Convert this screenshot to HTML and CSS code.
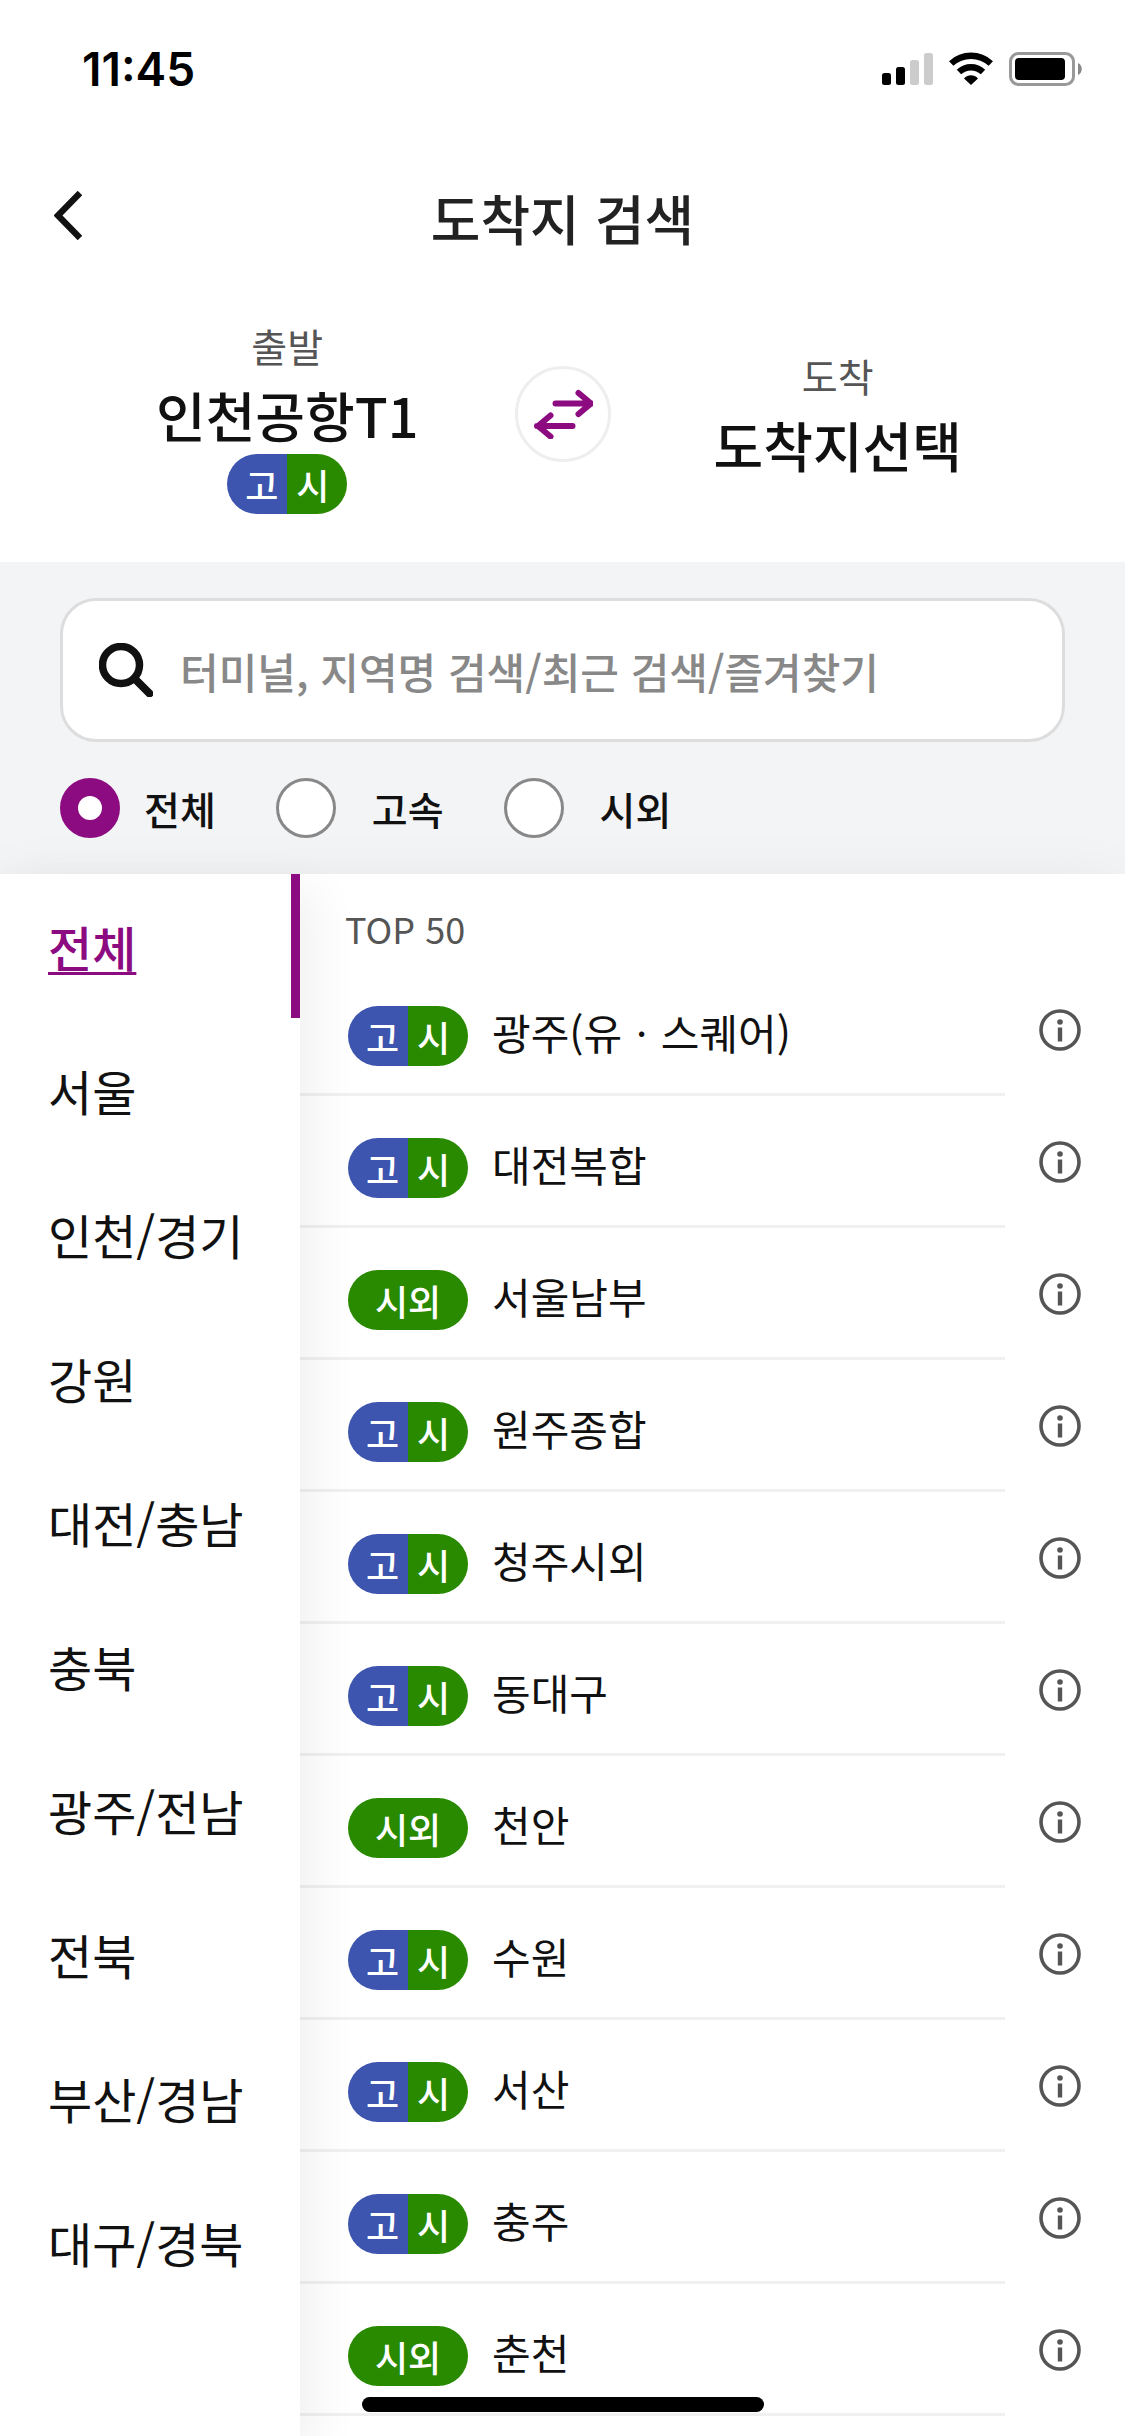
FILE: index.html
```html
<!DOCTYPE html>
<html lang="ko">
<head>
<meta charset="utf-8">
<meta name="viewport" content="width=device-width, initial-scale=1">
<title>도착지 검색</title>
<link rel="stylesheet" href="styles.css">
</head>
<body>
<svg class="sprite" aria-hidden="true">
  <symbol id="info" viewBox="0 0 42 42">
    <circle cx="21" cy="21" r="19" fill="none" stroke="currentColor" stroke-width="3.6"/>
    <circle cx="21" cy="13" r="2.8" fill="currentColor"/>
    <path d="M21 18.500v14" stroke="currentColor" stroke-width="4.400"/>
  </symbol>
</svg>

<div class="status-bar">
  <span class="status-time">11:45</span>
  <div class="status-icons">
    <svg width="51" height="34" viewBox="0 0 51 34" aria-hidden="true">
      <rect x="0" y="21" width="9" height="12" rx="2.500"/>
      <rect x="14" y="15" width="9" height="18" rx="2.500"/>
      <rect x="28" y="8" width="9" height="25" rx="2.500" fill="#ccc"/>
      <rect x="42" y="1" width="9" height="32" rx="2.500" fill="#ccc"/>
    </svg>
    <svg width="46" height="34" viewBox="0 0 46 34" aria-hidden="true">
      <path d="M3.200 11.500C14.500 1.200 31.500 1.200 42.800 11.500" fill="none" stroke="#000" stroke-width="6.400"/>
      <path d="M11 20C17.800 13.600 28.200 13.600 35 20" fill="none" stroke="#000" stroke-width="6.400"/>
      <path d="M16 26.500c4-4.300 10-4.300 14 0L23 33z"/>
    </svg>
    <svg width="74" height="34" viewBox="0 0 74 34" aria-hidden="true">
      <rect x="1.500" y="1.500" width="63" height="31" rx="8" fill="none" stroke="#999" stroke-width="3"/>
      <rect x="6" y="6" width="50" height="22" rx="4"/>
      <path d="M69 11c5 2 5 10 0 12z" fill="#888"/>
    </svg>
  </div>
</div>

<header class="header">
  <button class="back" type="button" aria-label="뒤로">
    <svg width="28" height="50" viewBox="0 0 28 50" aria-hidden="true"><path d="M26 2L4 24.500l22 22.500" fill="none" stroke="#111" stroke-width="6.400"/></svg>
  </button>
  <h1 class="title">도착지 검색</h1>
</header>

<section class="route">
  <div class="stop">
    <span class="stop-label">출발</span>
    <strong class="stop-name">인천공항T1</strong>
    <span class="badge"><span class="express">고</span><span class="intercity">시</span></span>
  </div>
  <button class="swap" type="button" aria-label="출발지와 도착지 바꾸기">
    <svg width="60" height="50" viewBox="0 0 60 50" aria-hidden="true"><path d="M22.500 14.500h36M45.500 4l12.500 10.500-12.500 10.500M39.500 37H4M17.500 26.500L5 37 17.500 47.500" fill="none" stroke="#8c0b80" stroke-width="6" stroke-linecap="round" stroke-linejoin="round"/></svg>
  </button>
  <div class="stop">
    <span class="stop-label">도착</span>
    <strong class="stop-name">도착지선택</strong>
  </div>
</section>

<form class="search">
  <label class="search-box">
    <svg width="54" height="54" viewBox="0 0 54 54" aria-hidden="true"><circle cx="22" cy="22" r="18.500" fill="none" stroke="#111" stroke-width="7.500"/><path d="M36 36l14.500 14.500" stroke="#111" stroke-width="8" stroke-linecap="round"/></svg>
    <input class="search-input" type="text" aria-label="터미널 검색" placeholder="터미널, 지역명 검색/최근 검색/즐겨찾기">
  </label>
  <div class="filters">
    <label class="filter"><input class="radio" type="radio" name="type" checked><span>전체</span></label>
    <label class="filter"><input class="radio" type="radio" name="type"><span>고속</span></label>
    <label class="filter"><input class="radio" type="radio" name="type"><span>시외</span></label>
  </div>
</form>

<main class="panel">
  <nav class="regions">
    <a class="region active" href="#all"><span>전체</span></a>
    <a class="region" href="#seoul">서울</a>
    <a class="region" href="#incheon">인천/경기</a>
    <a class="region" href="#gangwon">강원</a>
    <a class="region" href="#daejeon">대전/충남</a>
    <a class="region" href="#chungbuk">충북</a>
    <a class="region" href="#gwangju">광주/전남</a>
    <a class="region" href="#jeonbuk">전북</a>
    <a class="region" href="#busan">부산/경남</a>
    <a class="region" href="#daegu">대구/경북</a>
  </nav>
  <section class="terminals">
    <h2 class="list-title">TOP 50</h2>
    <ul class="list">
      <li class="row"><a class="terminal" href="#t1"><span class="badge"><span class="express">고</span><span class="intercity">시</span></span>광주(유ㆍ스퀘어)</a><button class="info" type="button" aria-label="정보"><svg width="42" height="42"><use href="#info"/></svg></button></li>
      <li class="row"><a class="terminal" href="#t2"><span class="badge"><span class="express">고</span><span class="intercity">시</span></span>대전복합</a><button class="info" type="button" aria-label="정보"><svg width="42" height="42"><use href="#info"/></svg></button></li>
      <li class="row"><a class="terminal" href="#t3"><span class="badge"><span class="only">시외</span></span>서울남부</a><button class="info" type="button" aria-label="정보"><svg width="42" height="42"><use href="#info"/></svg></button></li>
      <li class="row"><a class="terminal" href="#t4"><span class="badge"><span class="express">고</span><span class="intercity">시</span></span>원주종합</a><button class="info" type="button" aria-label="정보"><svg width="42" height="42"><use href="#info"/></svg></button></li>
      <li class="row"><a class="terminal" href="#t5"><span class="badge"><span class="express">고</span><span class="intercity">시</span></span>청주시외</a><button class="info" type="button" aria-label="정보"><svg width="42" height="42"><use href="#info"/></svg></button></li>
      <li class="row"><a class="terminal" href="#t6"><span class="badge"><span class="express">고</span><span class="intercity">시</span></span>동대구</a><button class="info" type="button" aria-label="정보"><svg width="42" height="42"><use href="#info"/></svg></button></li>
      <li class="row"><a class="terminal" href="#t7"><span class="badge"><span class="only">시외</span></span>천안</a><button class="info" type="button" aria-label="정보"><svg width="42" height="42"><use href="#info"/></svg></button></li>
      <li class="row"><a class="terminal" href="#t8"><span class="badge"><span class="express">고</span><span class="intercity">시</span></span>수원</a><button class="info" type="button" aria-label="정보"><svg width="42" height="42"><use href="#info"/></svg></button></li>
      <li class="row"><a class="terminal" href="#t9"><span class="badge"><span class="express">고</span><span class="intercity">시</span></span>서산</a><button class="info" type="button" aria-label="정보"><svg width="42" height="42"><use href="#info"/></svg></button></li>
      <li class="row"><a class="terminal" href="#t10"><span class="badge"><span class="express">고</span><span class="intercity">시</span></span>충주</a><button class="info" type="button" aria-label="정보"><svg width="42" height="42"><use href="#info"/></svg></button></li>
      <li class="row"><a class="terminal" href="#t11"><span class="badge"><span class="only">시외</span></span>춘천</a><button class="info" type="button" aria-label="정보"><svg width="42" height="42"><use href="#info"/></svg></button></li>
    </ul>
  </section>
</main>
<div class="home-indicator"></div>
</body>
</html>
```

FILE: styles.css
```css
*,
*::before,
*::after {
  box-sizing: border-box;
}

body {
  margin: 0;
  min-height: 100vh;
  display: flex;
  flex-direction: column;
  background: #fff;
  color: #111;
  font-family: "Noto Sans CJK KR", sans-serif;
}

button {
  padding: 0;
  border: 0;
  background: none;
  font: inherit;
}

a {
  color: inherit;
  text-decoration: none;
}

svg {
  display: block;
  flex: none;
}

.sprite {
  position: absolute;
  width: 0;
  height: 0;
}

/* Status bar */
.status-bar {
  display: flex;
  justify-content: space-between;
  align-items: center;
  height: 138px;
  padding: 0 42px 0 82px;
}

.status-time {
  font: 600 46px/54px Inter, sans-serif;
  color: #000;
}

.status-icons {
  display: flex;
  gap: 15px;
}

/* Header */
.header {
  display: grid;
  grid-template-columns: 84px 1fr 84px;
  align-items: center;
  height: 156px;
  padding: 0 54px;
}

.title {
  margin: 0;
  padding-top: 3px;
  text-align: center;
  color: #222;
  font-size: 54px;
  font-weight: 500;
  line-height: 78px;
}

/* Departure and arrival */
.route {
  display: grid;
  grid-template-columns: 1fr 96px 1fr;
  align-items: center;
  padding: 20px 60px 48px;
}

.stop {
  display: flex;
  flex-direction: column;
  align-items: center;
}

.stop-label {
  color: #555;
  font-size: 39px;
  line-height: 62px;
}

.stop-name {
  font-size: 54px;
  font-weight: 500;
  line-height: 78px;
}

.swap {
  display: grid;
  place-items: center;
  height: 96px;
  border: 3px solid #eee;
  border-radius: 50%;
}

/* Bus type badge */
.badge {
  display: flex;
  flex: none;
  width: 120px;
  overflow: hidden;
  border-radius: 30px;
  color: #fff;
  font-size: 36px;
  font-weight: 500;
  line-height: 60px;
  text-align: center;
}

.badge span {
  flex: 1;
}

.express {
  padding-left: 9px;
  background: #3d55ae;
}

.intercity {
  padding-right: 9px;
  background: #298a00;
}

.only {
  background: #298a00;
}

/* Search and filters */
.search {
  display: flex;
  flex-direction: column;
  gap: 36px;
  padding: 36px 60px;
  background: #f3f4f6;
}

.search-box {
  display: flex;
  align-items: center;
  gap: 27px;
  height: 144px;
  padding: 0 36px;
  border: 3px solid #ddd;
  border-radius: 36px;
  background: #fff;
}

.search-input {
  flex: 1;
  min-width: 0;
  padding: 2px 0 0;
  border: 0;
  outline: 0;
  background: none;
  color: #111;
  font: 500 42px/60px "Noto Sans CJK KR", sans-serif;
}

.search-input::placeholder {
  color: #888;
  opacity: 1;
}

.filters {
  display: flex;
  gap: 60px;
}

.filter {
  display: flex;
  align-items: center;
  gap: 36px;
  font-size: 39px;
  font-weight: 500;
  line-height: 60px;
}

.filter:first-child {
  gap: 24px;
}

.radio {
  appearance: none;
  width: 60px;
  height: 60px;
  margin: 0;
  border: 3px solid #888;
  border-radius: 50%;
  background: #fff;
}

.radio:checked {
  border: 18px solid #8c0b80;
}

/* Region and terminal lists */
.panel {
  position: relative;
  display: flex;
  flex: 1;
  background: #fff;
  box-shadow: 0 15px 60px rgba(0, 0, 0, 0.08);
}

.regions {
  position: relative;
  z-index: 1;
  flex: none;
  width: 300px;
  background: #fff;
  box-shadow: 15px 15px 45px rgba(0, 0, 0, 0.06);
}

.region {
  display: block;
  padding-left: 48px;
  font-size: 48px;
  line-height: 144px;
}

.active {
  border-right: 9px solid #8c0b80;
  color: #8c0b80;
  font-weight: 500;
  text-decoration: underline 3px;
  text-underline-offset: 5px;
}

.terminals {
  flex: 1;
  min-width: 0;
}

.list-title {
  margin: 0;
  padding: 18px 0 0 45px;
  color: #555;
  font-size: 36px;
  font-weight: 400;
  line-height: 72px;
}

.list {
  margin: 0;
  padding: 0;
  list-style: none;
}

.row {
  display: flex;
  height: 132px;
}

.terminal {
  display: flex;
  flex: 1;
  align-items: center;
  gap: 24px;
  padding: 6px 0 0 48px;
  border-bottom: 3px solid #f0f0f0;
  font-size: 42px;
  line-height: 60px;
}

.terminal .badge {
  margin-top: 9px;
}

.info {
  display: flex;
  align-items: center;
  width: 120px;
  padding-left: 34px;
  color: #555;
}

.home-indicator {
  position: fixed;
  z-index: 2;
  bottom: 24px;
  left: 50%;
  width: 402px;
  height: 15px;
  margin-left: -201px;
  border-radius: 8px;
  background: #000;
}
```
